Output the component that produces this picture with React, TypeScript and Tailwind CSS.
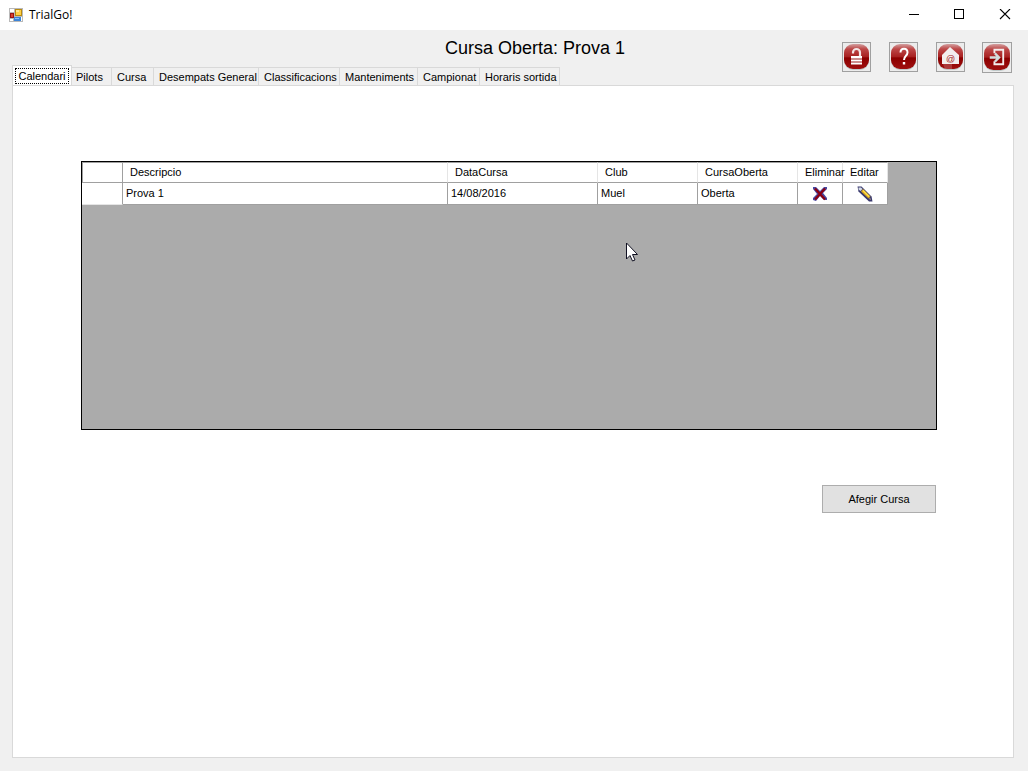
import React from 'react';

const tabs = [
  { label: 'Pilots', width: 'w-[40px] pl-1' },
  { label: 'Cursa', width: 'w-[42px] pl-[5px]' },
  { label: 'Desempats General', width: 'w-[105px] pl-[5px]' },
  { label: 'Classificacions', width: 'w-[81px] pl-[5px]' },
  { label: 'Manteniments', width: 'w-[78px] pl-[5px]' },
  { label: 'Campionat', width: 'w-[62px] pl-[5px]' },
  { label: 'Horaris sortida', width: 'w-[80px] pl-[5px]' }
];

const columns = [
  { label: 'Descripcio', width: 'w-[325px]' },
  { label: 'DataCursa', width: 'w-[150px]' },
  { label: 'Club', width: 'w-[100px]' },
  { label: 'CursaOberta', width: 'w-[100px]' },
  { label: 'Eliminar', width: 'w-[45px]' },
  { label: 'Editar', width: 'w-[45px]' }
];

const races = [
  { id: 1, description: 'Prova 1', date: '14/08/2016', club: 'Muel', status: 'Oberta' }
];

const AppIcon: React.FC = () => (
  <svg width="14" height="14" viewBox="0 0 14 14" shapeRendering="crispEdges" aria-hidden="true">
    <path d="M0 0H14V14H0Z" fill="#b9b9b9" />
    <path d="M1 1H5V4H1ZM1 11H4V13H1ZM12 9H13V13H12Z" fill="#fff" />
    <path d="M6 1H13V8H6Z" fill="#b88a10" />
    <path d="M7 2H12V7H7Z" fill="#ffd044" />
    <path d="M7 2H10V4H7Z" fill="#ffe695" />
    <path d="M1 5H5V10H1Z" fill="#9b1313" />
    <path d="M2 6H4V9H2Z" fill="#d8402d" />
    <path d="M5 9H12V13H5Z" fill="#3b84d8" />
    <path d="M6 10H10V11H6Z" fill="#8cc0f4" />
  </svg>
);

const ToolbarButton: React.FC<{ label: string; id: string; size?: string; children: React.ReactNode }> = ({
  label,
  id,
  size = 'h-[30px] w-[29px]',
  children
}) => (
  <button aria-label={label} className={`border border-[#a0a0a0] bg-[#ececec] ${size}`}>
    <svg className="block h-full w-full" viewBox="0 0 27 28" aria-hidden="true">
      <defs>
        <linearGradient id={id} x1="0" y1="0" x2="0" y2="1">
          <stop offset="0" stopColor="#d3a0a0" />
          <stop offset="0.2" stopColor="#bd4848" />
          <stop offset="0.5" stopColor="#a82222" />
          <stop offset="0.56" stopColor="#8b0000" />
          <stop offset="1" stopColor="#a01010" />
        </linearGradient>
      </defs>
      <rect x="1" y="3" width="25" height="24" rx="9" fill="#c0caca" />
      <rect x="1" y="1" width="25" height="25" rx="9" fill={`url(#${id})`} />
      {children}
    </svg>
  </button>
);

const DeleteIcon: React.FC = () => (
  <svg width="16" height="16" viewBox="0 0 16 16" aria-hidden="true">
    <path d="M1 1H4L8 5L12 1H15V3L11 7L15 12V14H12L8 10L4 15L1 14V12L5 8L1 3Z" fill="#4646a0" />
    <path d="M3 2.500L13 13.500M13 2.500L3 13.500" stroke="#8c0012" strokeWidth="2.200" />
  </svg>
);

const PencilIcon: React.FC = () => (
  <svg width="16" height="16" viewBox="0 0 16 16" aria-hidden="true">
    <path d="M0.500 0.500H4.500L14.500 10.500L15.500 15.500H12L1.500 5.500Z" fill="#38386e" />
    <path d="M1.500 1.500H4L5.500 3L3.500 5L1.500 3.500Z" fill="#d5dce6" />
    <path d="M6 3L13.500 10.500L11.500 12.500L4 5.500Z" fill="#d8a51c" />
    <path d="M6 4.500L12 10.500" stroke="#ffe04a" strokeWidth="1.500" />
    <path d="M13 11.500L14 14L12 13Z" fill="#b7a58a" />
  </svg>
);

const TitleBar: React.FC = () => (
  <div className="flex h-[30px] items-center bg-white pl-[9px] pr-[17px]">
    <AppIcon />
    <span className="ml-[6px] flex-1 font-['Open_Sans',sans-serif] text-[12px] leading-4">TrialGo!</span>
    <div className="flex gap-[33px]">
      <button aria-label="Minimitzar">
        <svg width="12" height="12" viewBox="0 0 12 12" shapeRendering="crispEdges">
          <path d="M0 5H10V6H0Z" />
        </svg>
      </button>
      <button aria-label="Maximitzar">
        <svg width="12" height="12" viewBox="0 0 12 12" shapeRendering="crispEdges">
          <path d="M0.500 0.500H9.500V9.500H0.500Z" fill="none" stroke="#000" />
        </svg>
      </button>
      <button aria-label="Tancar">
        <svg width="12" height="12" viewBox="0 0 12 12">
          <path d="M1 0L11 10M11 0L1 10" stroke="#000" strokeWidth="1.100" />
        </svg>
      </button>
    </div>
  </div>
);

const Toolbar: React.FC = () => (
  <div className="flex h-[35px] items-start pr-[2px]">
    <h1 className="flex-1 pl-[216px] pt-[6px] text-center font-['Liberation_Sans',sans-serif] text-[18px] leading-6">
      Cursa Oberta: Prova 1
    </h1>
    <div className="flex items-start gap-[18px] pt-3">
      <ToolbarButton label="Bloquejar" id="lock">
        <path d="M10 10.500V9.500A3.500 3.500 0 0 1 17 9.500V13" fill="none" stroke="#f3e7e7" strokeWidth="2.200" />
        <path d="M8 13H19V15.500H8ZM8 16.500H19V18.500H8ZM8 19.500H19V21.500H8Z" fill="#fff" />
        <path d="M8 15.500H19V16.500H8ZM8 18.500H19V19.500H8Z" fill="#d39a9a" />
      </ToolbarButton>
      <ToolbarButton label="Ajuda" id="help">
        <path d="M10.500 9.500C10.500 4.500 17.500 4.500 17.500 9.500C17.500 13 14 12.500 14 17" fill="none" stroke="#fff" strokeWidth="2" />
        <path d="M12.800 19H15.200V21.500H12.800Z" fill="#fff" />
      </ToolbarButton>
      <ToolbarButton label="Inici" id="home">
        <path d="M13 4L22 12V21H5V12Z" fill="#f2eeee" />
        <path d="M6 21H15V26H8Z" fill="#c98080" opacity="0.4" />
        <text x="13.500" y="19" fontSize="9" textAnchor="middle" fill="#a51b1b" fontFamily="Liberation Sans">
          @
        </text>
      </ToolbarButton>
      <div className="-ml-px flex">
        <ToolbarButton label="Sortir" id="exit" size="h-[31px] w-[30px]">
          <path d="M11 10V6.500H19.500V20.500H11V17.500" fill="none" stroke="#f3eded" strokeWidth="1.800" />
          <path d="M6.500 14H15M11.500 10L15.500 14L11.500 18" fill="none" stroke="#d3dede" strokeWidth="2.200" />
        </ToolbarButton>
      </div>
    </div>
  </div>
);

const TabList: React.FC = () => (
  <div role="tablist" className="flex items-end">
    <button
      role="tab"
      aria-selected="true"
      className="-mb-px h-[21px] w-[60px] border border-b-0 border-[#d9d9d9] bg-white px-[2px] pb-[2px] pt-[2px]"
    >
      <span className="block h-[16px] border border-dotted border-black text-center leading-[14px]">Calendari</span>
    </button>
    {tabs.map((tab) => (
      <button
        key={tab.label}
        role="tab"
        aria-selected="false"
        className={`h-[18px] whitespace-nowrap border-r border-t border-[#d9d9d9] text-left leading-[18px] ${tab.width}`}
      >
        {tab.label}
      </button>
    ))}
  </div>
);

const RaceGrid: React.FC = () => (
  <div className="h-[269px] border border-black bg-[#ababab]">
    <table className="w-[806px] table-fixed border-separate border-spacing-0 bg-white">
      <thead>
        <tr className="h-[21px]">
          <th aria-label="Fila" className="w-[41px] border border-[#a0a0a0] p-0" />
          {columns.map((column) => (
            <th
              key={column.label}
              className={`border-b border-r border-t border-b-[#a0a0a0] border-r-[#e5e5e5] border-t-[#a0a0a0] p-0 pl-[7px] text-left font-normal leading-[19px] whitespace-nowrap ${column.width}`}
            >
              {column.label}
            </th>
          ))}
        </tr>
      </thead>
      <tbody>
        {races.map((race) => (
          <tr key={race.id} className="h-[22px]">
            <td className="border-b border-r border-b-[#e5e5e5] border-r-[#a0a0a0] p-0" />
            {[race.description, race.date, race.club, race.status].map((value) => (
              <td key={value} className="border-b border-r border-[#a0a0a0] p-0 pl-[3px] leading-[21px]">
                {value}
              </td>
            ))}
            <td className="border-b border-r border-[#a0a0a0] p-0">
              <button aria-label="Eliminar" className="mx-auto block">
                <DeleteIcon />
              </button>
            </td>
            <td className="border-b border-r border-[#a0a0a0] p-0">
              <button aria-label="Editar" className="mx-auto block">
                <PencilIcon />
              </button>
            </td>
          </tr>
        ))}
      </tbody>
    </table>
  </div>
);

const App: React.FC = () => {
  return (
    <div className="relative flex min-h-screen flex-col bg-[#f0f0f0] font-['Liberation_Sans',sans-serif] text-[11px] text-black">
      <TitleBar />
      <main className="flex flex-1 flex-col pb-[13px] pl-3 pr-[14px]">
        <Toolbar />
        <TabList />
        <section className="flex-1 border border-[#d9d9d9] bg-white pl-[68px] pr-[76px] pt-[75px]">
          <RaceGrid />
          <div className="mt-[55px] flex justify-end pr-px">
            <button className="h-[28px] w-[114px] border border-[#adadad] bg-[#e1e1e1]">Afegir Cursa</button>
          </div>
        </section>
      </main>

      {/* Mouse pointer */}
      <svg className="pointer-events-none absolute left-[626px] top-[242px]" width="13" height="20" viewBox="0 0 13 20" aria-hidden="true">
        <path d="M0.500 1V17L4 13.500L6.500 19L9 18L6.500 12.500H11.500Z" fill="#fff" stroke="#111122" />
      </svg>
    </div>
  );
};

export default App;
